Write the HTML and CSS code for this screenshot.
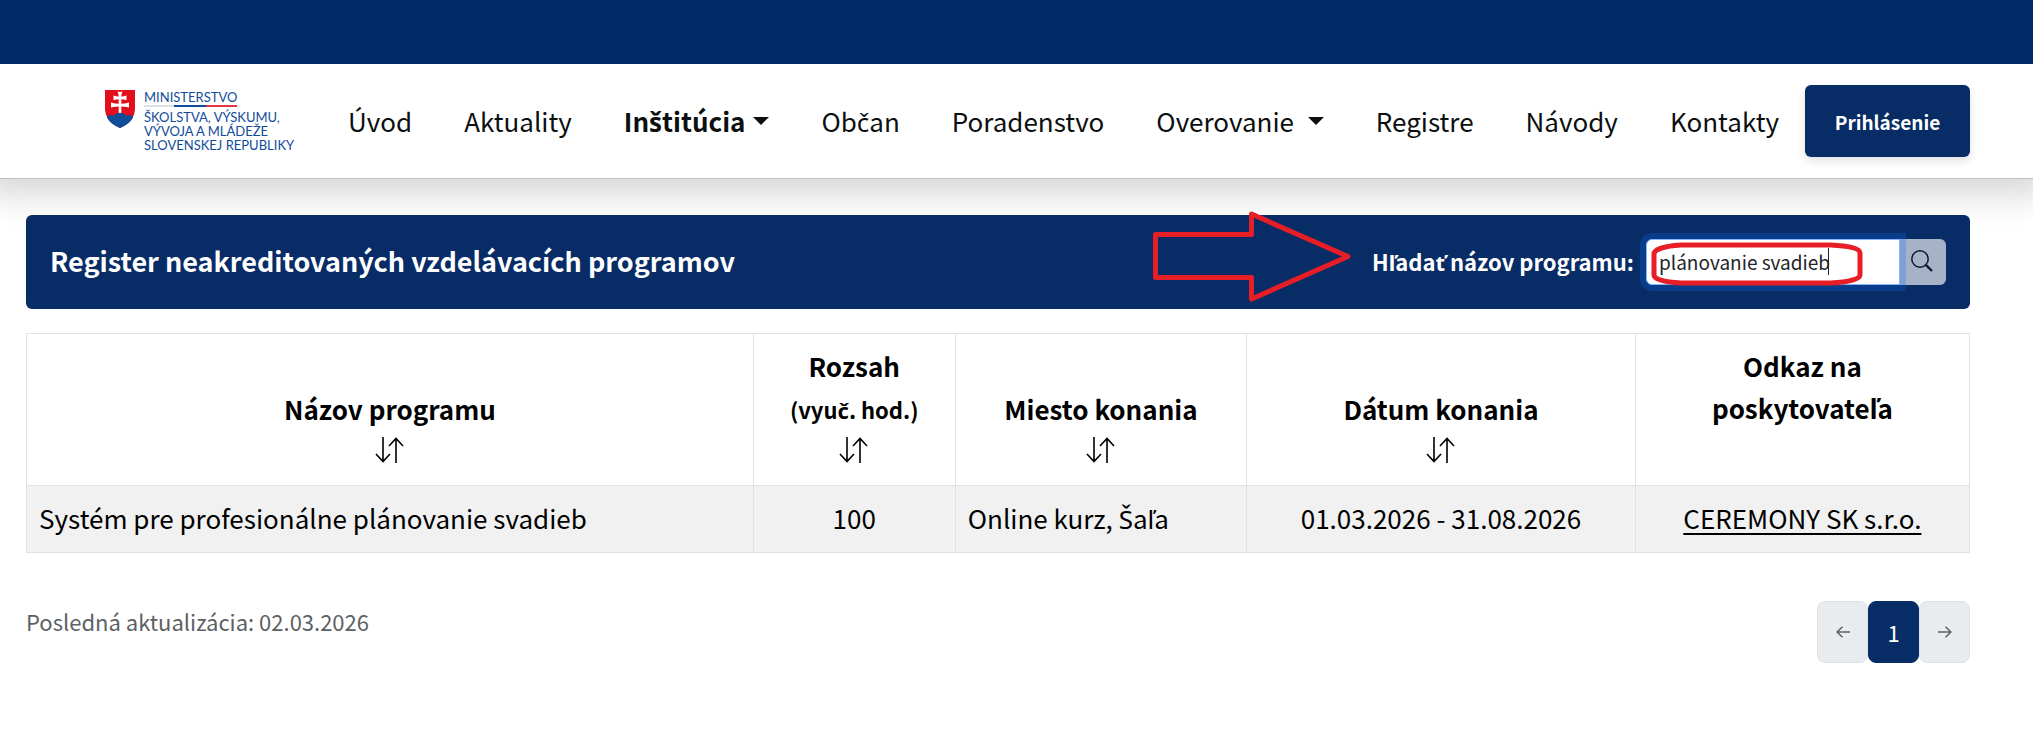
FILE: index.html
```html
<!DOCTYPE html>
<html lang="sk">
<head>
<meta charset="utf-8">
<title>Register neakreditovaných vzdelávacích programov</title>
<link rel="stylesheet" href="styles.css">
</head>
<body>
<div class="topbar"></div>
<header class="header">
  <a class="logo" href="#">
    <svg class="logo-shield" viewBox="0 0 30 38" aria-hidden="true">
      <path fill="#e2101c" d="M0 0H30V18C30 28 24 34 15 38C6 34 0 28 0 18Z"/>
      <path fill="#0f4c99" d="M1.800 27C4 24.500 7 24.500 9 26C10 21.500 20 21.500 21 26C23 24.500 26 24.500 28.200 27C25.500 32.500 21 35.500 15 38C9 35.500 4.500 32.500 1.800 27Z"/>
      <path fill="#fff" d="M12.500 1.500Q15 2.300 17.500 1.500Q16.300 4 16.300 6.600Q19 6.600 21.500 5.500V10.200Q19 9.200 16.300 9.200V13.800Q20 13.800 24 12.500V17.500Q20 16.400 16.300 16.400V23Q15 22.500 13.700 23V16.400Q10 16.400 6 17.500V12.500Q10 13.800 13.700 13.800V9.200Q11 9.200 8.500 10.200V5.500Q11 6.600 13.700 6.600Q13.700 4 12.500 1.500Z"/>
    </svg>
    <span class="logo-text">
      <span class="logo-top">MINISTERSTVO</span>
      <span>ŠKOLSTVA, VÝSKUMU,</span>
      <span>VÝVOJA A MLÁDEŽE</span>
      <span>SLOVENSKEJ REPUBLIKY</span>
    </span>
  </a>
  <nav class="nav">
    <a href="#">Úvod</a>
    <a href="#">Aktuality</a>
    <a class="active" href="#">In<span class="ext">š</span>titúcia<span class="caret"></span></a>
    <a href="#">Ob<span class="ext">č</span>an</a>
    <a href="#">Poradenstvo</a>
    <a href="#">Overovanie <span class="caret"></span></a>
    <a href="#">Registre</a>
    <a href="#">Návody</a>
    <a href="#">Kontakty</a>
  </nav>
  <button class="login" type="button">Prihlásenie</button>
</header>
<main class="content">
  <section class="panel">
    <h1>Register neakreditovaných vzdelávacích programov</h1>
    <svg class="arrow" viewBox="0 0 200 92" aria-hidden="true">
      <path d="M3.500 23.500H99.500V3L196 45.500L99.500 88V66.500H3.500Z"/>
    </svg>
    <form class="search">
      <label for="q">H<span class="ext">ľ</span>ada<span class="ext">ť</span> názov programu:</label>
      <div class="group">
        <input id="q" type="text" value="plánovanie svadieb">
        <button type="button" aria-label="Hľadať">
          <svg viewBox="0 0 22 22" aria-hidden="true"><circle cx="9" cy="9" r="8.200"/><path d="M14.800 14.800L21 21" stroke-width="2.400"/></svg>
        </button>
        <span class="cursor"></span>
        <svg class="mark" viewBox="0 0 212 44" aria-hidden="true">
          <path d="M3 12C3 7 14 4 30 3H180C196 4 209 6 209 11V33C209 37 198 40 180 41H30C12 40 3 37 3 33Z"/>
        </svg>
      </div>
    </form>
  </section>
  <table class="programs">
    <colgroup><col class="c-name"><col class="c-hours"><col class="c-place"><col class="c-date"><col class="c-link"></colgroup>
    <thead>
      <tr>
        <th>Názov programu<svg class="sort" viewBox="0 0 30 26" aria-hidden="true"><path d="M8 0V24.500M1 17L8 24.500L15 17M21 26V1.500M14 9L21 1.500L28 9"/></svg></th>
        <th>Rozsah<br><small>(vyu<span class="ext">č</span>. hod.)</small><svg class="sort" viewBox="0 0 30 26" aria-hidden="true"><path d="M8 0V24.500M1 17L8 24.500L15 17M21 26V1.500M14 9L21 1.500L28 9"/></svg></th>
        <th>Miesto konania<svg class="sort" viewBox="0 0 30 26" aria-hidden="true"><path d="M8 0V24.500M1 17L8 24.500L15 17M21 26V1.500M14 9L21 1.500L28 9"/></svg></th>
        <th>Dátum konania<svg class="sort" viewBox="0 0 30 26" aria-hidden="true"><path d="M8 0V24.500M1 17L8 24.500L15 17M21 26V1.500M14 9L21 1.500L28 9"/></svg></th>
        <th class="top">Odkaz na<br>poskytovate<span class="ext">ľ</span>a</th>
      </tr>
    </thead>
    <tbody>
      <tr>
        <td>Systém pre profesionálne plánovanie svadieb</td>
        <td class="center">100</td>
        <td>Online kurz, <span class="ext">Š</span>a<span class="ext">ľ</span>a</td>
        <td class="center">01.03.2026 - 31.08.2026</td>
        <td class="center"><a href="#">CEREMONY SK s.r.o.</a></td>
      </tr>
    </tbody>
  </table>
  <div class="foot">
    <p>Posledná aktualizácia: 02.03.2026</p>
    <nav class="pager" aria-label="Stránkovanie">
      <button type="button" aria-label="Predchádzajúca"><svg viewBox="0 0 14 12" aria-hidden="true"><path d="M14 6H1M6.500 .7L1 6L6.500 11.300"/></svg></button>
      <button class="current" type="button">1</button>
      <button type="button" aria-label="Nasledujúca"><svg viewBox="0 0 14 12" aria-hidden="true"><path d="M0 6H13M7.500 .7L13 6L7.500 11.300"/></svg></button>
    </nav>
  </div>
</main>
</body>
</html>
```
FILE: styles.css
```css
* { box-sizing: border-box; }

body {
  margin: 0;
  background: #fff;
  color: #000;
  font: 26px/42px "Noto Sans CJK SC", "Noto Sans", sans-serif;
}

button, input { font-family: inherit; }

/* Caron letters that the main family has no glyphs for */
.ext { font-family: "Noto Sans", sans-serif; line-height: 1; }

.topbar { position: relative; z-index: 1; height: 64px; background: #002d69; }

.header {
  display: flex;
  align-items: center;
  min-height: 115px;
  padding: 0 63px 0 105px;
  border-bottom: 1px solid #bfc1c1;
  box-shadow: 0 0 32px 16px rgba(0, 0, 0, .16);
}

.logo {
  display: flex;
  gap: 9px;
  color: #0f4c99;
  text-decoration: none;
}
.logo-shield { width: 30px; height: 38px; }
.logo-text {
  display: flex;
  flex-direction: column;
  font: 13px/14px Lato, sans-serif;
  white-space: nowrap;
}
.logo-top {
  align-self: flex-start;
  margin-bottom: 3px;
  padding-bottom: 1px;
  border-bottom: 2px solid;
  border-image: linear-gradient(90deg, #dcdfe3 33%, #0f4c99 33% 66%, #e53540 66%) 1;
}

.nav { display: flex; margin-left: auto; }
.nav a {
  padding: 0 26px;
  color: #0b0f10;
  text-decoration: none;
  white-space: nowrap;
}
.nav .active { font-weight: 700; }
.caret {
  display: inline-block;
  margin-left: 8px;
  vertical-align: 7px;
  border: 8px solid transparent;
  border-top-color: currentColor;
  border-bottom: 0;
}

.login {
  width: 165px;
  height: 72px;
  border: 0;
  border-radius: 6px;
  background: #082c66;
  color: #fff;
  font-size: 19px;
  font-weight: 700;
  box-shadow: 0 4px 10px rgba(0, 0, 0, .12);
}

.content { position: relative; padding: 36px 63px 0 26px; }

.panel {
  position: relative;
  display: flex;
  align-items: center;
  justify-content: space-between;
  min-height: 94px;
  padding: 0 24px;
  border-radius: 6px;
  background: #082c66;
  color: #fff;
}
.panel h1 { margin: 0; padding-bottom: 2px; font-size: 27px; font-weight: 700; }
.arrow {
  position: absolute;
  top: -4px;
  right: 618px;
  width: 200px;
  height: 92px;
}
.arrow path, .mark path { fill: none; stroke: #e81e27; stroke-width: 5; stroke-linejoin: round; }

.search { display: flex; align-items: center; gap: 12px; }
.search label { padding-bottom: 2px; font-size: 22px; font-weight: 700; }
.group { position: relative; display: flex; width: 300px; height: 46px; }
.group input {
  position: relative;
  z-index: 1;
  flex: 1;
  min-width: 0;
  padding: 0 12px 2px;
  border: 1px solid #86b7fe;
  border-radius: 6px 0 0 6px;
  outline: 0;
  background: #fff;
  color: #212529;
  font-size: 19px;
  box-shadow: 0 0 0 6px rgba(13, 110, 253, .25);
}
.group button {
  display: flex;
  align-items: center;
  justify-content: center;
  width: 46px;
  padding: 0 2px 2px 0;
  border: 0;
  border-radius: 0 6px 6px 0;
  background: #a7b1c8;
}
.group button svg { width: 22px; height: 22px; fill: none; stroke: #10182c; stroke-width: 1.500; }
.cursor { position: absolute; z-index: 2; top: 9px; left: 182px; width: 1px; height: 27px; background: #212529; }
.mark { position: absolute; z-index: 2; top: 3px; left: 5px; width: 212px; height: 44px; pointer-events: none; }

.programs {
  width: 100%;
  margin-top: 24px;
  border-collapse: collapse;
  table-layout: fixed;
}
.c-name { width: 37.4%; }
.c-hours { width: 10.4%; }
.c-place { width: 15%; }
.c-date { width: 20%; }
.programs th, .programs td { padding: 11px 12px 13px; border: 1px solid #dee2e6; text-align: left; }
.programs th { height: 151px; text-align: center; vertical-align: bottom; }
.programs .top { vertical-align: top; }
.programs small { font-size: 22px; }
.programs .center { text-align: center; }
.programs tbody td { background: #f1f1f1; }
.programs a { color: inherit; text-underline-offset: 4px; }
.sort { display: block; width: 30px; height: 26px; margin: 7px auto 9px; fill: none; stroke: #000; stroke-width: 1.600; }

.foot { display: flex; justify-content: space-between; align-items: flex-start; padding-top: 48px; }
.foot p { margin: 0; color: #5c6164; font-size: 22px; line-height: 40px; }
.pager { display: flex; }
.pager button {
  display: flex;
  align-items: center;
  justify-content: center;
  width: 51px;
  height: 62px;
  padding: 0;
  border: 1px solid #dee2e6;
  border-radius: 8px;
  background: #e9ecef;
  color: #5c6164;
  font-size: 22px;
}
.pager .current { border-color: #082c66; background: #082c66; color: #fff; }
.pager svg { width: 14px; height: 12px; fill: none; stroke: currentColor; stroke-width: 1.500; }
```
